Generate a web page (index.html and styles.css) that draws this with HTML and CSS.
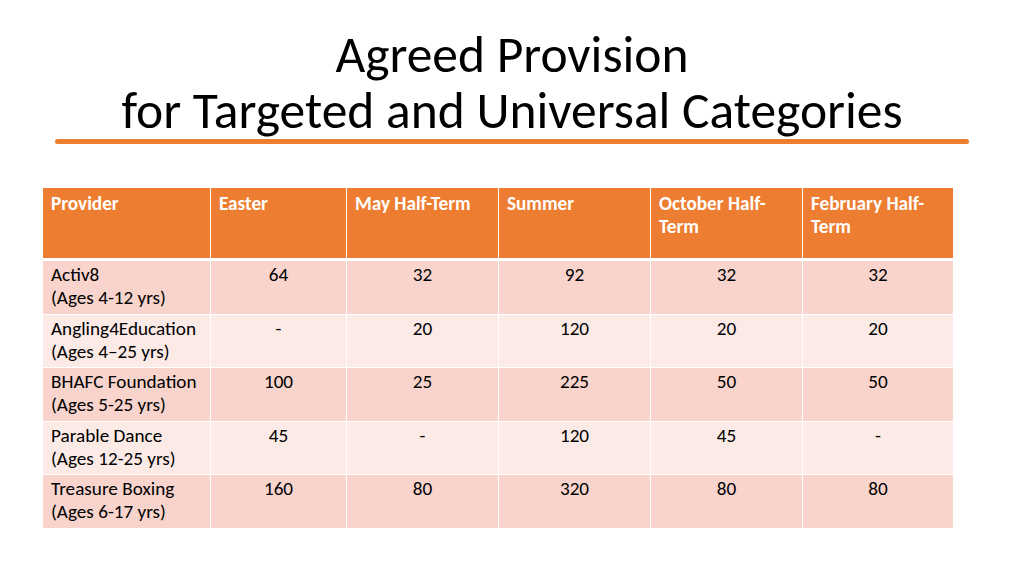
FILE: index.html
```html
<!DOCTYPE html>
<html lang="en">
<head>
<meta charset="utf-8">
<title>Agreed Provision</title>
<link rel="stylesheet" href="styles.css">
</head>
<body>
<div class="slide">
  <h1 class="title"><span class="line">Agreed Provision</span><span class="line">for Targeted and Universal Categories</span></h1>
  <div class="rule"></div>
  <table class="grid">
    <colgroup>
      <col class="c1"><col class="c2"><col class="c3"><col class="c4"><col class="c5"><col class="c6">
    </colgroup>
    <thead>
      <tr>
        <th>Provider</th>
        <th>Easter</th>
        <th>May Half-Term</th>
        <th>Summer</th>
        <th>October Half-<br>Term</th>
        <th>February Half-<br>Term</th>
      </tr>
    </thead>
    <tbody>
      <tr class="odd">
        <td class="name">Activ8<br>(Ages 4-12 yrs)</td>
        <td>64</td><td>32</td><td>92</td><td>32</td><td>32</td>
      </tr>
      <tr class="even">
        <td class="name">Angling4Education<br>(Ages 4–25 yrs)</td>
        <td>-</td><td>20</td><td>120</td><td>20</td><td>20</td>
      </tr>
      <tr class="odd">
        <td class="name">BHAFC Foundation<br>(Ages 5-25 yrs)</td>
        <td>100</td><td>25</td><td>225</td><td>50</td><td>50</td>
      </tr>
      <tr class="even">
        <td class="name">Parable Dance<br>(Ages 12-25 yrs)</td>
        <td>45</td><td>-</td><td>120</td><td>45</td><td>-</td>
      </tr>
      <tr class="odd">
        <td class="name">Treasure Boxing<br>(Ages 6-17 yrs)</td>
        <td>160</td><td>80</td><td>320</td><td>80</td><td>80</td>
      </tr>
    </tbody>
  </table>
</div>
</body>
</html>
```
FILE: styles.css
```css
html, body {
  margin: 0;
  padding: 0;
  background: #ffffff;
}
.slide {
  width: 1024px;
  height: 576px;
  overflow: hidden;
  font-family: "Carlito", "Calibri", "Lato", sans-serif;
  color: #000000;
}
.title {
  margin: 0;
  padding-top: 27px;
  font-size: 51.5px;
  font-weight: normal;
  line-height: 56px;
  text-align: center;
}
.title .line {
  display: block;
}
.rule {
  width: 914px;
  height: 5px;
  margin: 0 0 0 55px;
  background: #ed7d31;
  border-radius: 3px;
}
.grid {
  margin: 44px 0 0 42px;
  border-collapse: collapse;
  table-layout: fixed;
  width: 911px;
  font-size: 19.2px;
  line-height: 23px;
}
.c1 { width: 168px; }
.c2 { width: 136px; }
.c3 { width: 152px; }
.c4 { width: 152px; }
.c5 { width: 152px; }
.c6 { width: 151px; }
.grid th {
  background: #ed7d31;
  color: #ffffff;
  font-weight: bold;
  text-align: left;
  vertical-align: top;
  padding: 4px 8px;
  height: 62px;
  border-left: 1px solid #ffffff;
  border-right: 1px solid #ffffff;
  border-bottom: 3px solid #ffffff;
}
.grid td {
  vertical-align: top;
  text-align: center;
  padding: 2px 8px 4.5px;
  border: 1px solid #ffffff;
}
.grid td.name {
  text-align: left;
}
.grid tr.odd td {
  background: #f8d4cc;
}
.grid tr.even td {
  background: #fbeae6;
}
```
